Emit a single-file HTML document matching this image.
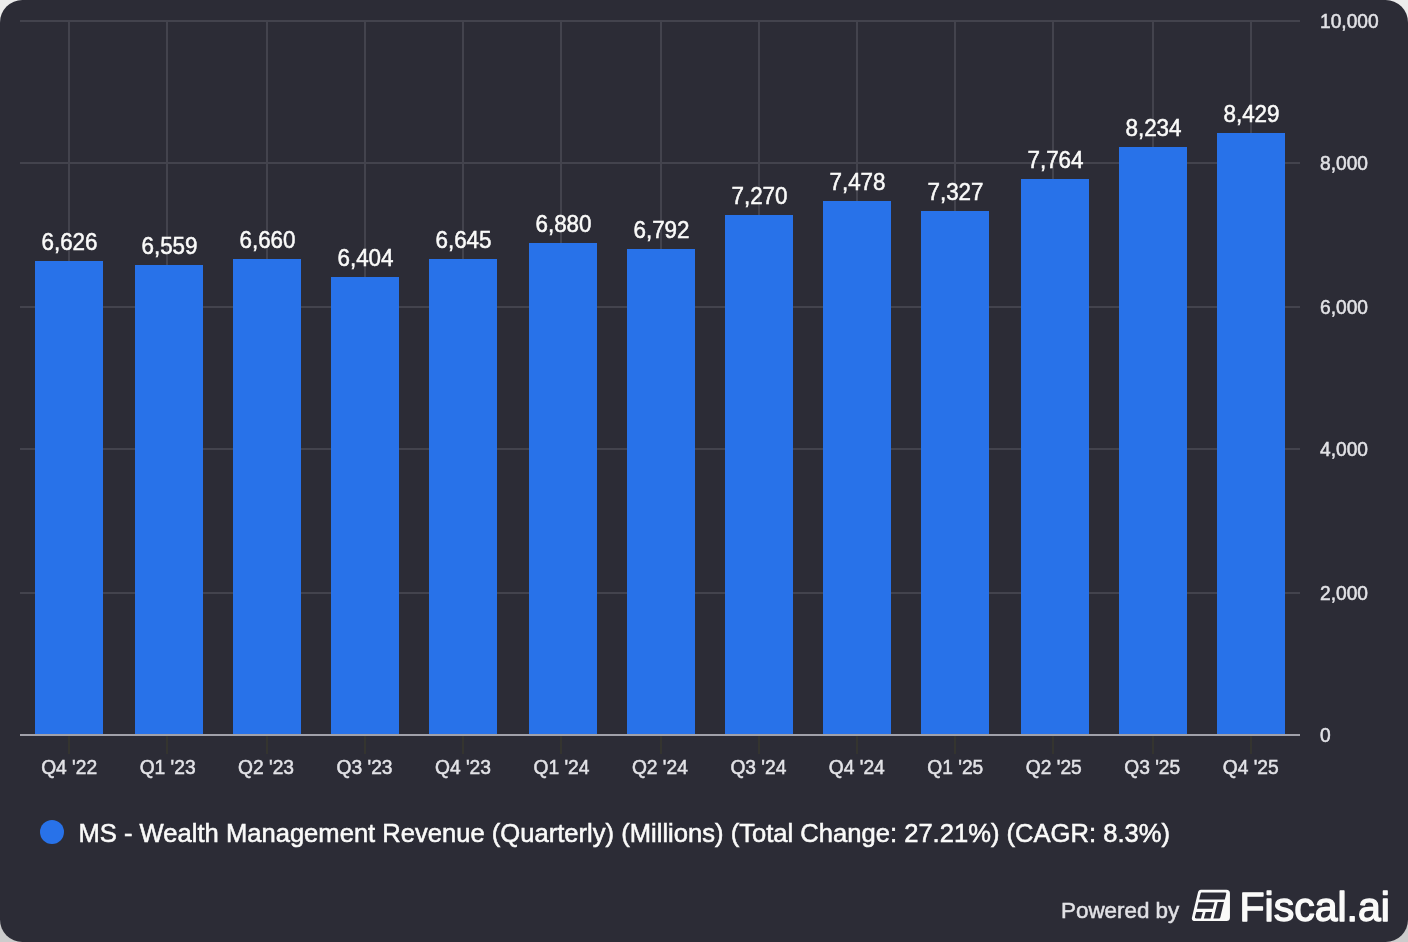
<!DOCTYPE html>
<html lang="en">
<head>
<meta charset="utf-8">
<title>MS - Wealth Management Revenue (Quarterly)</title>
<style>
html,body{margin:0;padding:0;background:#dcdcdc;}
body{width:1408px;height:942px;overflow:hidden;}
svg{display:block;will-change:transform;}
text{font-family:"Liberation Sans",Arial,Helvetica,sans-serif;}
.tick{font-size:19.2px;fill:#e2e2e6;stroke:#e2e2e6;stroke-width:0.5px;}
.val{font-size:22.4px;fill:#fafaf9;stroke:#fafaf9;stroke-width:0.5px;text-anchor:middle;}
.xl{text-anchor:middle;}
.legend{font-size:25.6px;fill:#fafaf9;stroke:#fafaf9;stroke-width:0.55px;}
.pow{font-size:22.4px;fill:#e2e2e6;stroke:#e2e2e6;stroke-width:0.5px;}
.brand{font-size:41px;fill:#fafaf9;stroke:#fafaf9;stroke-width:1.4px;stroke-linejoin:round;}
</style>
</head>
<body>
<svg width="1408" height="942" viewBox="0 0 1408 942">
<rect x="0" y="0" width="1408" height="471" fill="#ececec"/>
<rect x="0" y="471" width="1408" height="471" fill="#cccccc"/>
<rect x="0" y="0" width="1408" height="942" rx="22.4" ry="22.4" fill="#2c2c36"/>

<g fill="#43434d" shape-rendering="crispEdges">
<rect x="20" y="20" width="1280" height="2"/>
<rect x="20" y="162" width="1280" height="2"/>
<rect x="20" y="306" width="1280" height="2"/>
<rect x="20" y="448" width="1280" height="2"/>
<rect x="20" y="592" width="1280" height="2"/>
<rect x="68" y="20" width="2" height="714"/>
<rect x="166" y="20" width="2" height="714"/>
<rect x="266" y="20" width="2" height="714"/>
<rect x="364" y="20" width="2" height="714"/>
<rect x="462" y="20" width="2" height="714"/>
<rect x="560" y="20" width="2" height="714"/>
<rect x="660" y="20" width="2" height="714"/>
<rect x="758" y="20" width="2" height="714"/>
<rect x="856" y="20" width="2" height="714"/>
<rect x="954" y="20" width="2" height="714"/>
<rect x="1052" y="20" width="2" height="714"/>
<rect x="1152" y="20" width="2" height="714"/>
<rect x="1250" y="20" width="2" height="714"/>
</g>
<g fill="#34342f" shape-rendering="crispEdges">
<rect x="68" y="736" width="2" height="18"/>
<rect x="166" y="736" width="2" height="18"/>
<rect x="266" y="736" width="2" height="18"/>
<rect x="364" y="736" width="2" height="18"/>
<rect x="462" y="736" width="2" height="18"/>
<rect x="560" y="736" width="2" height="18"/>
<rect x="660" y="736" width="2" height="18"/>
<rect x="758" y="736" width="2" height="18"/>
<rect x="856" y="736" width="2" height="18"/>
<rect x="954" y="736" width="2" height="18"/>
<rect x="1052" y="736" width="2" height="18"/>
<rect x="1152" y="736" width="2" height="18"/>
<rect x="1250" y="736" width="2" height="18"/>
</g>
<g fill="#2872e9" shape-rendering="crispEdges">
<rect x="35" y="261" width="68" height="473"/>
<rect x="135" y="265" width="68" height="469"/>
<rect x="233" y="259" width="68" height="475"/>
<rect x="331" y="277" width="68" height="457"/>
<rect x="429" y="259" width="68" height="475"/>
<rect x="529" y="243" width="68" height="491"/>
<rect x="627" y="249" width="68" height="485"/>
<rect x="725" y="215" width="68" height="519"/>
<rect x="823" y="201" width="68" height="533"/>
<rect x="921" y="211" width="68" height="523"/>
<rect x="1021" y="179" width="68" height="555"/>
<rect x="1119" y="147" width="68" height="587"/>
<rect x="1217" y="133" width="68" height="601"/>
</g>
<rect x="20" y="734" width="1280" height="2" fill="#a1a1aa" shape-rendering="crispEdges"/>
<g>
<text class="val" transform="translate(69.5 250.1) scale(1 1.03)">6,626</text>
<text class="val" transform="translate(169.5 254.1) scale(1 1.03)">6,559</text>
<text class="val" transform="translate(267.5 248.1) scale(1 1.03)">6,660</text>
<text class="val" transform="translate(365.5 266.1) scale(1 1.03)">6,404</text>
<text class="val" transform="translate(463.5 248.1) scale(1 1.03)">6,645</text>
<text class="val" transform="translate(563.5 232.1) scale(1 1.03)">6,880</text>
<text class="val" transform="translate(661.5 238.1) scale(1 1.03)">6,792</text>
<text class="val" transform="translate(759.5 204.1) scale(1 1.03)">7,270</text>
<text class="val" transform="translate(857.5 190.1) scale(1 1.03)">7,478</text>
<text class="val" transform="translate(955.5 200.1) scale(1 1.03)">7,327</text>
<text class="val" transform="translate(1055.5 168.1) scale(1 1.03)">7,764</text>
<text class="val" transform="translate(1153.5 136.1) scale(1 1.03)">8,234</text>
<text class="val" transform="translate(1251.5 122.1) scale(1 1.03)">8,429</text>
</g>
<g>
<text class="tick" transform="translate(1320 27.8) scale(1 1.03)">10,000</text>
<text class="tick" transform="translate(1320 169.8) scale(1 1.03)">8,000</text>
<text class="tick" transform="translate(1320 313.8) scale(1 1.03)">6,000</text>
<text class="tick" transform="translate(1320 455.8) scale(1 1.03)">4,000</text>
<text class="tick" transform="translate(1320 599.8) scale(1 1.03)">2,000</text>
<text class="tick" transform="translate(1320 741.8) scale(1 1.03)">0</text>
</g>
<g>
<text class="tick xl" transform="translate(69.13 774) scale(1 1.02)">Q4 '22</text>
<text class="tick xl" transform="translate(167.59 774) scale(1 1.02)">Q1 '23</text>
<text class="tick xl" transform="translate(266.05 774) scale(1 1.02)">Q2 '23</text>
<text class="tick xl" transform="translate(364.52 774) scale(1 1.02)">Q3 '23</text>
<text class="tick xl" transform="translate(462.98 774) scale(1 1.02)">Q4 '23</text>
<text class="tick xl" transform="translate(561.44 774) scale(1 1.02)">Q1 '24</text>
<text class="tick xl" transform="translate(659.9 774) scale(1 1.02)">Q2 '24</text>
<text class="tick xl" transform="translate(758.36 774) scale(1 1.02)">Q3 '24</text>
<text class="tick xl" transform="translate(856.82 774) scale(1 1.02)">Q4 '24</text>
<text class="tick xl" transform="translate(955.28 774) scale(1 1.02)">Q1 '25</text>
<text class="tick xl" transform="translate(1053.75 774) scale(1 1.02)">Q2 '25</text>
<text class="tick xl" transform="translate(1152.21 774) scale(1 1.02)">Q3 '25</text>
<text class="tick xl" transform="translate(1250.67 774) scale(1 1.02)">Q4 '25</text>
</g>
<circle cx="52" cy="832" r="12" fill="#2872e9"/>
<text class="legend" transform="translate(78.5 842.3) scale(1 1.025)">MS - Wealth Management Revenue (Quarterly) (Millions) (Total Change: 27.21%) (CAGR: 8.3%)</text>
<text class="pow" x="1061" y="917.8">Powered by</text>
<g transform="translate(1186 884) scale(0.0446)"><path fill="#fafaf9" fill-rule="evenodd" d="
M335 130 L905 130 A80 80 0 0 1 985 210 L985 752 A80 80 0 0 1 905 832 L210 832 C150 832 118 800 136 738 L264 208 C278 150 300 130 335 130 Z
M345 190 L880 190 Q910 190 903 218 L870 345 L295 345 L328 212 Q334 190 345 190 Z
M280 408 L640 408 L600 555 L245 555 Z
M710 405 L850 405 L770 745 Q762 775 740 775 L615 775 Z
M230 625 L375 625 L335 775 L235 775 Q190 775 200 735 Z
M440 625 L585 625 L550 775 L400 775 Z"/></g>
<text class="brand" x="1239.5" y="920.7">Fiscal.ai</text>
</svg>
</body>
</html>
